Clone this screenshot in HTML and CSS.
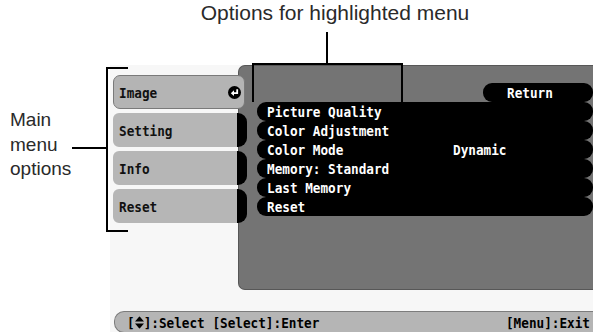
FILE: index.html
```html
<!DOCTYPE html>
<html lang="en">
<head>
    <meta charset="UTF-8">
    <meta name="viewport" content="width=device-width, initial-scale=1.0">
    <title>Projector Menu</title>
    <link rel="stylesheet" href="styles.css">
</head>
<body>
    <!-- callouts -->
    <div class="note note-top">Options for highlighted menu</div>
    <div class="stem"></div>
    <div class="bracket-top"></div>
    <div class="note note-left">Main<br>menu<br>options</div>
    <div class="tick"></div>
    <div class="bracket-left"></div>

    <div class="osd">
        <div class="osd-main">
            <div class="menu">
                <div class="tab active">
                    <span class="osd-text">Image</span>
                    <svg class="enter" width="13" height="13" viewBox="0 0 13 13">
                        <circle cx="6.5" cy="6.5" r="6.5" fill="#000"/>
                        <path d="M9.2 3.2v4H5" stroke="#fff" stroke-width="1.8" fill="none"/>
                        <path d="M6 4.3L2.8 7.2L6 10.1z" fill="#fff"/>
                    </svg>
                </div>
                <div class="tab"><span class="osd-text">Setting</span></div>
                <div class="tab"><span class="osd-text">Info</span></div>
                <div class="tab"><span class="osd-text">Reset</span></div>
            </div>

            <div class="panel">
                <div class="return-row">
                    <div class="return"><span class="osd-text">Return</span></div>
                </div>
                <div class="row"><span class="osd-text label">Picture Quality</span></div>
                <div class="row"><span class="osd-text label">Color Adjustment</span></div>
                <div class="row"><span class="osd-text label">Color Mode</span><span class="osd-text">Dynamic</span></div>
                <div class="row"><span class="osd-text label">Memory: Standard</span></div>
                <div class="row"><span class="osd-text label">Last Memory</span></div>
                <div class="row"><span class="osd-text label">Reset</span></div>
            </div>
        </div>

        <div class="osd-foot">
            <span class="osd-text">[<svg class="updown" width="9" height="11" viewBox="0 0 9 11"><path d="M0 4.6L4.5 0L9 4.6z M0 6.4L4.5 11L9 6.4z" fill="#000"/></svg>]:Select [Select]:Enter</span>
            <span class="osd-text">[Menu]:Exit</span>
        </div>
    </div>
</body>
</html>
```

FILE: styles.css
```css
body { margin: 0; width: 593px; height: 332px; overflow: hidden; position: relative; background: #fff; }

/* callout labels and lines */
.note { position: absolute; font-family: "Liberation Sans", Arial, sans-serif; color: #2a2a2a; }
.note-top { left: 190px; top: 1px; width: 290px; text-align: center; font-size: 21px; }
.note-left { left: 10px; top: 108px; font-size: 19px; line-height: 24.5px; }
.stem { position: absolute; left: 326px; top: 32px; width: 2px; height: 32px; background: #000; }
.bracket-top { position: absolute; left: 252px; top: 63px; width: 147px; height: 37px; border: 2px solid #000; border-bottom: none; }
.bracket-left { position: absolute; left: 106px; top: 67px; width: 20px; height: 161px; border: 2px solid #000; border-right: none; }
.tick { position: absolute; left: 72px; top: 147px; width: 35px; height: 2px; background: #000; }

/* on-screen display */
.osd { margin: 65px 0 0 110px; height: 267px; background: #f7f7f7; }
.osd-text { display: inline-block; font-family: "DejaVu Sans Mono", monospace; font-weight: bold; font-size: 12.7px; transform: scaleY(1.15); white-space: pre; }
.osd-main { display: flex; height: 225px; }

.menu { width: 128px; padding: 10px 0 0 3px; box-sizing: border-box; display: flex; flex-direction: column; gap: 4px; position: relative; z-index: 1; }
.tab { width: 134px; height: 34px; box-sizing: border-box; display: flex; align-items: center; justify-content: space-between; padding: 0 3px 0 6px; color: #111; border-radius: 6px 9px 9px 6px; background: linear-gradient(to right, #b6b6b6 124px, #000 124px); }
.tab.active { width: 132px; background: #b4b4b4; border: 1px solid #7a7a7a; border-radius: 7px; padding-left: 5px; }
.enter { display: block; }

.panel { flex: 1; box-sizing: border-box; background: #747474; border: 1px solid #575757; border-right: none; border-radius: 7px 0 0 7px; padding: 17px 0 0 18px; color: #fff; }
.return-row { display: flex; justify-content: flex-end; }
.return { width: 110px; height: 19px; background: #000; border-radius: 9px; display: flex; align-items: center; padding-left: 24px; box-sizing: border-box; }
.row { height: 19px; background: #000; border-radius: 9px; display: flex; align-items: center; padding-left: 10px; }
.row .label { width: 186px; }

.osd-foot { margin: 21px 0 0 4px; height: 22px; box-sizing: border-box; background: #b5b5b5; border: 1px solid #7c7c7c; border-right: none; border-radius: 10px 0 0 10px; display: flex; align-items: center; justify-content: space-between; padding: 0 3px 0 12px; color: #000; }
.updown { vertical-align: -1px; margin: 0 0 0 0; }
```
